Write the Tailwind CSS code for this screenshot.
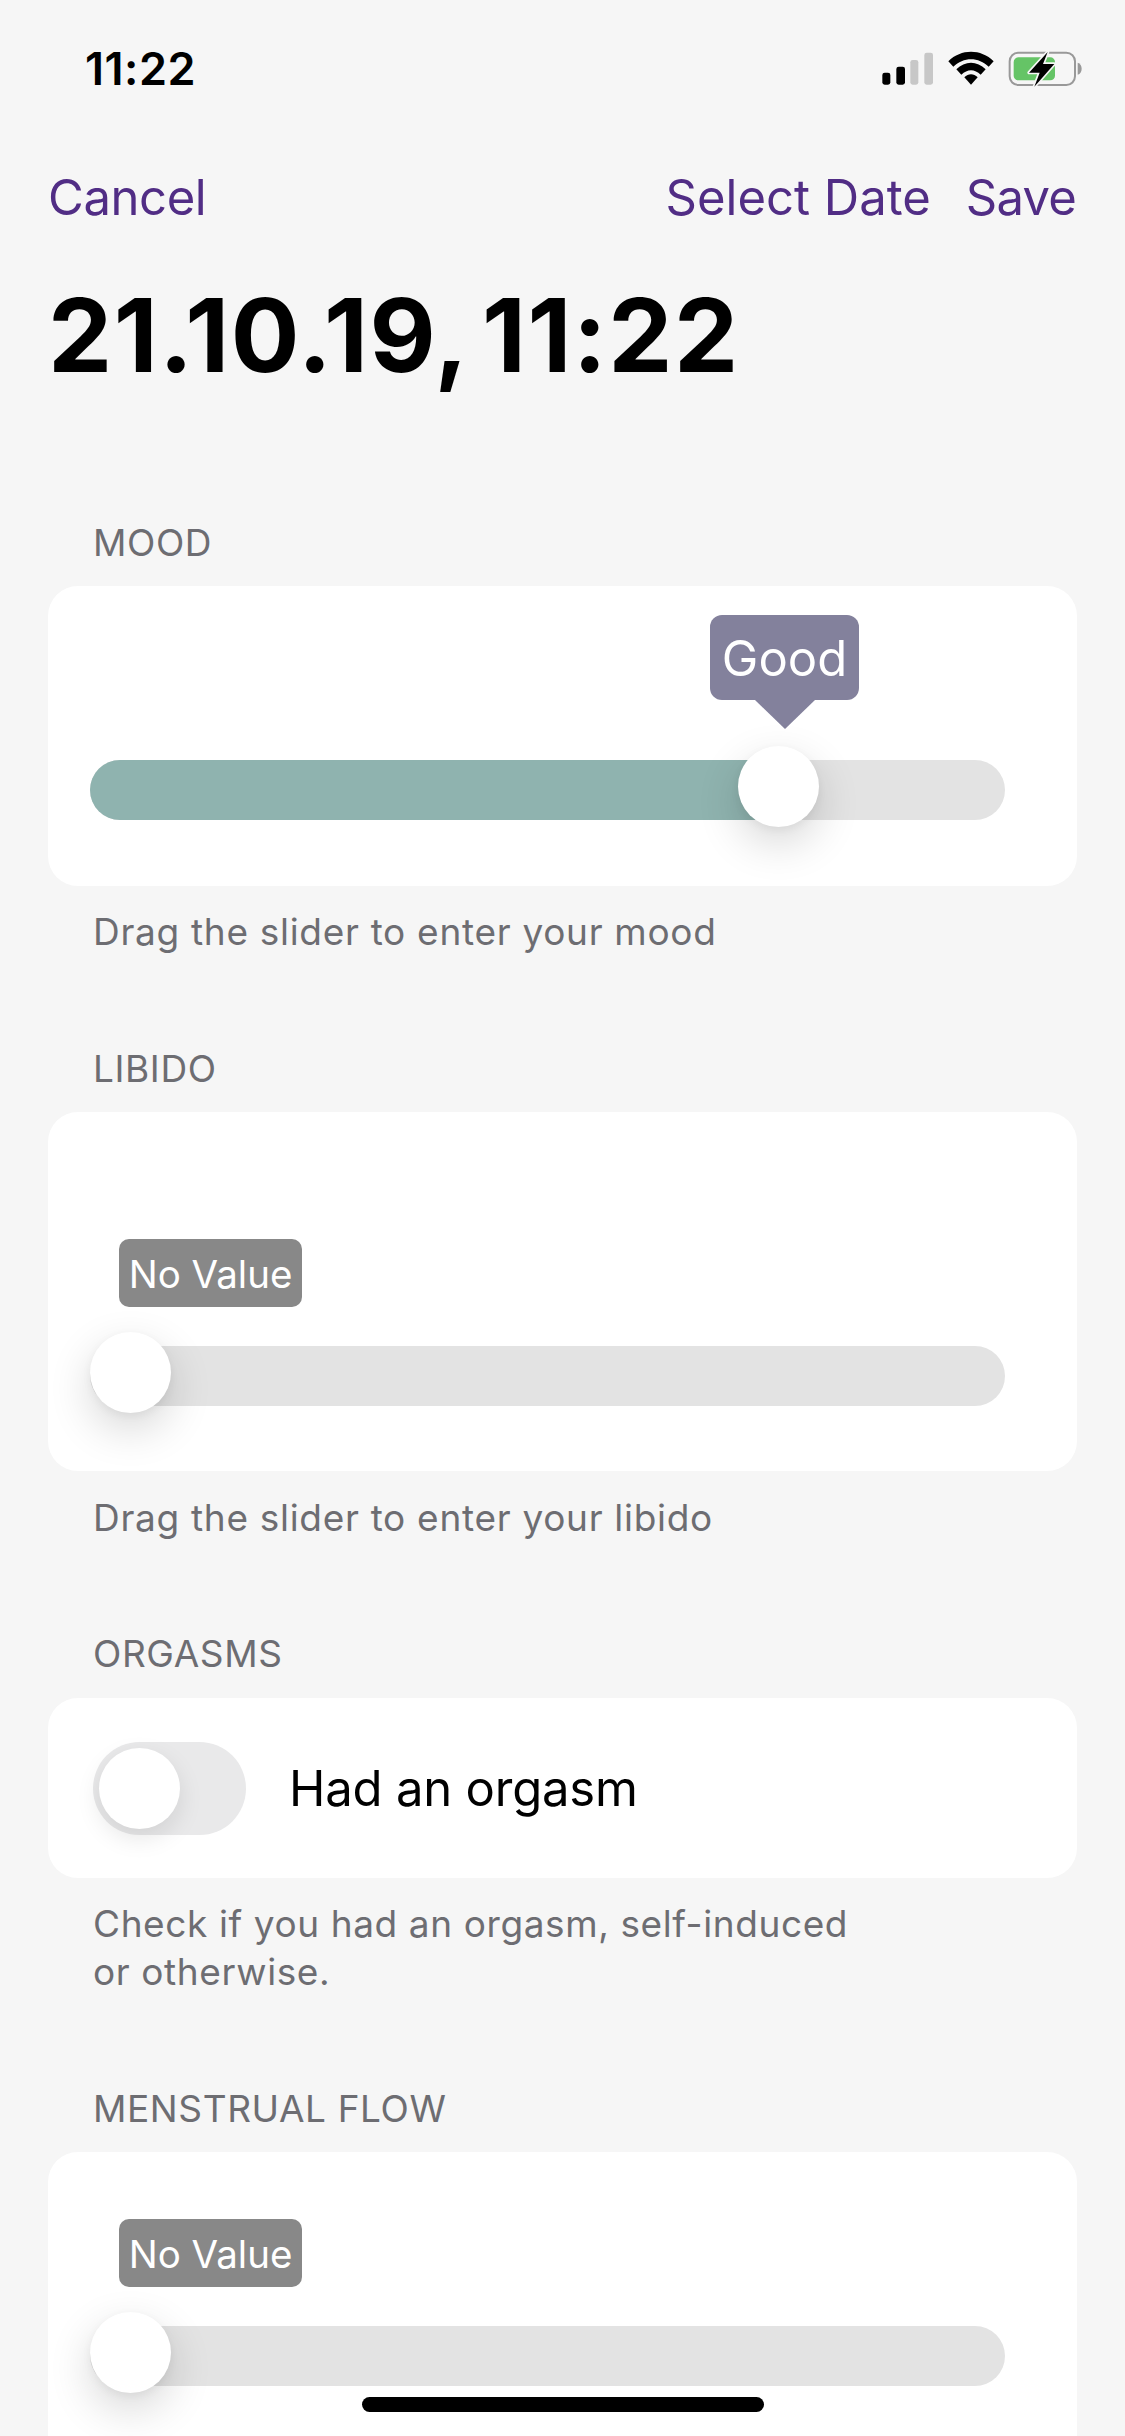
<!DOCTYPE html>
<html lang="en">
<head>
<meta charset="utf-8">
<script src="https://cdn.jsdelivr.net/npm/@tailwindcss/browser@4"></script>
</head>
<body class="m-0">
<div class="relative w-[1125px] h-[2436px] overflow-hidden bg-[#f6f6f6] font-['Inter','Liberation_Sans',sans-serif] text-black">
  <!-- status bar -->
  <div class="flex h-[167px] items-start justify-between">
    <div class="ml-[85px] mt-[41px] text-[45px] leading-[56px] font-semibold tracking-[0.5px]">11:22</div>
    <svg class="mt-[30px]" width="300" height="80" viewBox="0 0 900 240">
      <rect x="172" y="128" width="24" height="36" rx="7" fill="#000"/>
      <rect x="214" y="110" width="26" height="54" rx="7" fill="#000"/>
      <rect x="256" y="90" width="24" height="74" rx="7" fill="#c7c7c7"/>
      <rect x="298" y="68" width="26" height="96" rx="7" fill="#c7c7c7"/>
      <path d="M370 94C408 56 468 56 506 94L491 110C461 80 415 80 385 110Z" fill="#000"/>
      <path d="M394 118C420 92 456 92 482 118L467 134C449 116 427 116 409 134Z" fill="#000"/>
      <path d="M418 142C430 130 446 130 458 142L438 164Z" fill="#000"/>
      <rect x="554" y="68" width="196" height="97" rx="26" fill="none" stroke="#999" stroke-width="6"/>
      <path d="M758 98C766 100 770 108 770 116C770 124 766 132 758 134Z" fill="#999"/>
      <rect x="566" y="82" width="124" height="69" rx="14" fill="#65c466"/>
      <path d="M668 66L612 128H644L628 170L688 102H654Z" fill="#000" stroke="#f6f6f6" stroke-width="10" stroke-linejoin="round" paint-order="stroke"/>
    </svg>
  </div>
  <!-- nav -->
  <div class="flex h-[60px] items-center justify-between pt-[2px] pl-[48px] pr-[49px] text-[#512d85] text-[49px] leading-[60px]">
    <span class="tracking-[-0.4px]">Cancel</span>
    <div class="flex gap-[35px]"><span>Select Date</span><span class="tracking-[-0.8px]">Save</span></div>
  </div>
  <!-- title -->
  <h1 class="mt-[48px] h-[120px] pl-[48px] text-[102px] leading-[120px] font-bold tracking-[1.4px] [word-spacing:-10px]">21.10.19, 11:22</h1>
  <div class="pt-[123px]">
    <!-- mood -->
    <section>
      <div class="h-[48px] pl-[93px] text-[37px] leading-[50px] tracking-[0.6px] text-[#6d6d72]">MOOD</div>
      <div class="mx-[48px] mt-[20px] h-[300px] rounded-[30px] bg-white pt-[174px] pl-[42px] pr-[72px]">
        <div class="relative h-[60px] rounded-full bg-[#e3e3e3]">
          <div class="h-[60px] w-[680px] rounded-l-full bg-[#8fb3af]"></div>
          <div class="absolute left-[620px] top-[-145px] flex h-[85px] w-[149px] items-center justify-center rounded-[12px] bg-[#83819c] pt-[2px] text-[49px] leading-[60px] text-white">Good</div>
          <svg class="absolute left-[665px] top-[-60px]" width="60" height="29" viewBox="0 0 60 29"><path d="M0 0H60L30 29Z" fill="#83819c"/></svg>
          <div class="absolute left-[648px] top-[-14px] h-[81px] w-[81px] rounded-full bg-white shadow-[0_16px_44px_rgba(0,0,0,0.16),0_3px_10px_rgba(0,0,0,0.05)]"></div>
        </div>
      </div>
      <p class="mt-[22px] pl-[93px] text-[37px] leading-[48px] tracking-[0.7px] text-[#6d6d72]">Drag the slider to enter your mood</p>
    </section>
    <!-- libido -->
    <section class="mt-[88px]">
      <div class="h-[48px] pl-[93px] text-[37px] leading-[50px] tracking-[0.6px] text-[#6d6d72]">LIBIDO</div>
      <div class="mx-[48px] mt-[20px] h-[359px] rounded-[30px] bg-white pt-[234px] pl-[42px] pr-[72px]">
        <div class="relative h-[60px] rounded-full bg-[#e3e3e3]">
          <div class="absolute left-[29px] top-[-107px] flex h-[68px] w-[183px] items-center justify-center rounded-[10px] bg-[#888888] pt-[2px] text-[38.5px] leading-[50px] text-white">No Value</div>
          <div class="absolute left-0 top-[-14px] h-[81px] w-[81px] rounded-full bg-white shadow-[0_16px_44px_rgba(0,0,0,0.16),0_3px_10px_rgba(0,0,0,0.05)]"></div>
        </div>
      </div>
      <p class="mt-[22px] pl-[93px] text-[37px] leading-[50px] h-[48px] tracking-[0.7px] text-[#6d6d72]">Drag the slider to enter your libido</p>
    </section>
    <!-- orgasms -->
    <section class="mt-[88px]">
      <div class="h-[48px] pl-[93px] text-[37px] leading-[50px] tracking-[0.6px] text-[#6d6d72]">ORGASMS</div>
      <div class="mx-[48px] mt-[21px] flex h-[180px] items-center gap-[43px] rounded-[30px] bg-white pl-[45px]">
        <div class="relative h-[93px] w-[153px] rounded-full bg-[#e9e9ea]">
          <div class="absolute left-[6px] top-[6px] h-[81px] w-[81px] rounded-full bg-white shadow-[0_9px_24px_rgba(0,0,0,0.1)]"></div>
        </div>
        <span class="pt-[2px] text-[49px] leading-[60px] tracking-[-0.2px]">Had an orgasm</span>
      </div>
      <p class="mt-[22px] max-w-[870px] pl-[93px] text-[37px] leading-[48px] tracking-[0.6px] text-[#6d6d72]">Check if you had an orgasm, self-induced or otherwise.</p>
    </section>
    <!-- menstrual flow -->
    <section class="mt-[88px]">
      <div class="h-[48px] pl-[93px] text-[37px] leading-[50px] tracking-[0.6px] text-[#6d6d72]">MENSTRUAL FLOW</div>
      <div class="mx-[48px] mt-[20px] h-[359px] rounded-[30px] bg-white pt-[174px] pl-[42px] pr-[72px]">
        <div class="relative h-[60px] rounded-full bg-[#e3e3e3]">
          <div class="absolute left-[29px] top-[-107px] flex h-[68px] w-[183px] items-center justify-center rounded-[10px] bg-[#888888] pt-[2px] text-[38.5px] leading-[50px] text-white">No Value</div>
          <div class="absolute left-0 top-[-14px] h-[81px] w-[81px] rounded-full bg-white shadow-[0_16px_44px_rgba(0,0,0,0.16),0_3px_10px_rgba(0,0,0,0.05)]"></div>
        </div>
      </div>
    </section>
  </div>
  <!-- home indicator -->
  <div class="absolute bottom-[24px] left-[362px] h-[15px] w-[402px] rounded-full bg-black"></div>
</div>
</body>
</html>
